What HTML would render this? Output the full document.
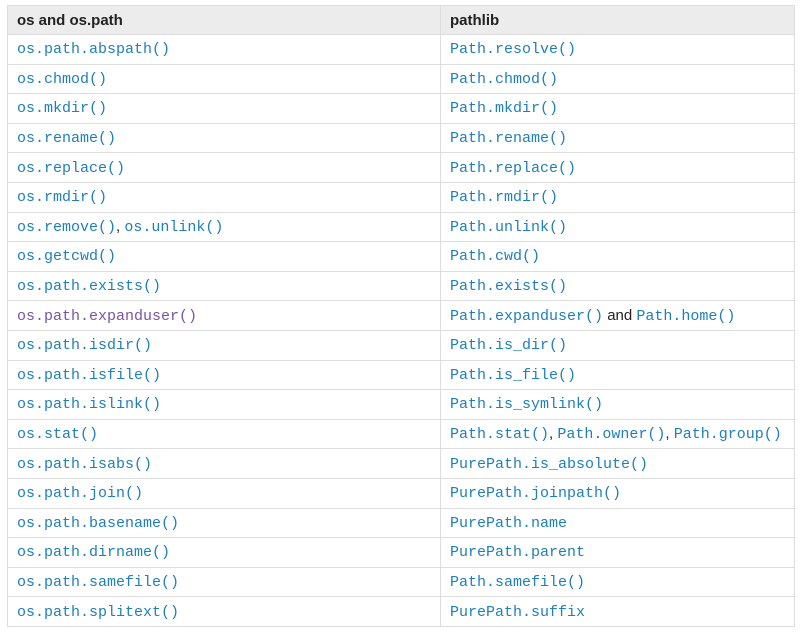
<!DOCTYPE html>
<html><head><style>
body{margin:0;background:#fff;}
table{position:absolute;left:7px;top:5px;width:788px;border-collapse:collapse;font-family:"Liberation Sans",sans-serif;font-size:15px;color:#222;}
td,th{border:1px solid #ddd;height:28.6px;padding:0 0 0 9px;text-align:left;white-space:nowrap;}
th{background:#ececec;font-weight:bold;height:28px;}
td:first-child,th:first-child{width:423px;}
code{font-family:"Liberation Mono",monospace;font-size:15px;color:#1f7fb8;}
code.v{color:#7b52a8;}
</style></head><body>
<table>
<tr><th>os and os.path</th><th>pathlib</th></tr>
<tr><td><code>os.path.abspath()</code></td><td><code>Path.resolve()</code></td></tr>
<tr><td><code>os.chmod()</code></td><td><code>Path.chmod()</code></td></tr>
<tr><td><code>os.mkdir()</code></td><td><code>Path.mkdir()</code></td></tr>
<tr><td><code>os.rename()</code></td><td><code>Path.rename()</code></td></tr>
<tr><td><code>os.replace()</code></td><td><code>Path.replace()</code></td></tr>
<tr><td><code>os.rmdir()</code></td><td><code>Path.rmdir()</code></td></tr>
<tr><td><code>os.remove()</code>, <code>os.unlink()</code></td><td><code>Path.unlink()</code></td></tr>
<tr><td><code>os.getcwd()</code></td><td><code>Path.cwd()</code></td></tr>
<tr><td><code>os.path.exists()</code></td><td><code>Path.exists()</code></td></tr>
<tr><td><code class="v">os.path.expanduser()</code></td><td><code>Path.expanduser()</code> and <code>Path.home()</code></td></tr>
<tr><td><code>os.path.isdir()</code></td><td><code>Path.is_dir()</code></td></tr>
<tr><td><code>os.path.isfile()</code></td><td><code>Path.is_file()</code></td></tr>
<tr><td><code>os.path.islink()</code></td><td><code>Path.is_symlink()</code></td></tr>
<tr><td><code>os.stat()</code></td><td><code>Path.stat()</code>, <code>Path.owner()</code>, <code>Path.group()</code></td></tr>
<tr><td><code>os.path.isabs()</code></td><td><code>PurePath.is_absolute()</code></td></tr>
<tr><td><code>os.path.join()</code></td><td><code>PurePath.joinpath()</code></td></tr>
<tr><td><code>os.path.basename()</code></td><td><code>PurePath.name</code></td></tr>
<tr><td><code>os.path.dirname()</code></td><td><code>PurePath.parent</code></td></tr>
<tr><td><code>os.path.samefile()</code></td><td><code>Path.samefile()</code></td></tr>
<tr><td><code>os.path.splitext()</code></td><td><code>PurePath.suffix</code></td></tr>
</table>
</body></html>
